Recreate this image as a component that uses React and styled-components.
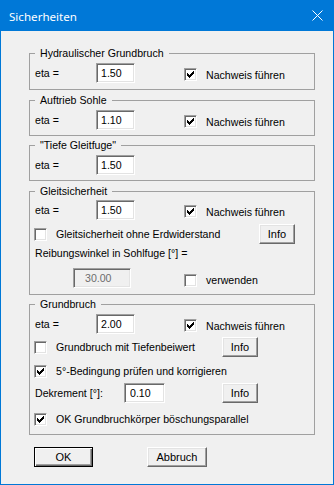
import React from "react";
import styled, { createGlobalStyle } from "styled-components";

const GlobalStyle = createGlobalStyle`
  html, body {
    margin: 0;
    padding: 0;
    background: #ffffff;
  }
  body {
    font-family: "Liberation Sans", Arial, sans-serif;
    font-size: 10.6px;
    color: #000;
  }
`;

const Window = styled.div`
  width: 334px;
  height: 485px;
  box-sizing: border-box;
  border: 1px solid #0078d7;
  background: #f0f0f0;
  display: flex;
  flex-direction: column;
`;

const TitleBar = styled.div`
  height: 30px;
  flex-shrink: 0;
  background: #0078d7;
  color: #fff;
  display: flex;
  align-items: center;
  justify-content: space-between;
  padding: 0 10px 0 8px;
  font-family: "Noto Sans", "Open Sans", sans-serif;
  font-size: 11.6px;
`;

const CloseIcon = styled.svg`
  display: block;
  margin-bottom: 2px;
`;

const Body = styled.div`
  padding: 16px 18px 0 28px;
  display: flex;
  flex-direction: column;
`;

const Group = styled.fieldset`
  margin: ${(p) => p.$mt || 0}px 0 0 0;
  padding: 0;
  border: 1px solid #a0a0a0;
  min-width: 0;
`;

const Legend = styled.legend`
  margin-left: 5px;
  padding: 0 5px;
  line-height: 12px;
  height: 12px;
  white-space: nowrap;
`;

const GroupBody = styled.div`
  padding: ${(p) => p.$pt}px 0 ${(p) => p.$pb}px 0;
  display: flex;
  flex-direction: column;
`;

const Row = styled.div`
  display: flex;
  align-items: center;
  height: ${(p) => p.$h ?? 20}px;
  margin-top: ${(p) => p.$mt || 0}px;
  padding-left: ${(p) => p.$pl ?? 5}px;
`;

const Label = styled.span`
  width: ${(p) => (p.$w ? `${p.$w}px` : "auto")};
  flex-shrink: 0;
  white-space: nowrap;
`;

const TextBox = styled.input`
  width: ${(p) => p.$w}px;
  height: 20px;
  box-sizing: border-box;
  flex-shrink: 0;
  margin: 0;
  padding: 0 0 0 ${(p) => p.$pad || 4}px;
  font: inherit;
  color: #000;
  background: #fff;
  border: 1px solid;
  border-color: #a0a0a0 #ffffff #ffffff #a0a0a0;
  box-shadow: inset 1px 1px 0 #696969, inset -1px -1px 0 #e3e3e3;
  outline: none;

  &:disabled {
    background: #f0f0f0;
    color: #6d6d6d;
  }
`;

const CheckPair = styled.div`
  display: flex;
  align-items: center;
  flex-shrink: 0;
  margin-left: ${(p) => p.$ml || 0}px;
  margin-top: ${(p) => p.$dy || 0}px;
  width: ${(p) => (p.$w ? `${p.$w}px` : "auto")};
  white-space: nowrap;
`;

const Box = styled.span`
  width: 13px;
  height: 13px;
  box-sizing: border-box;
  flex-shrink: 0;
  background: #fff;
  border: 1px solid;
  border-color: #a0a0a0 #ffffff #ffffff #a0a0a0;
  box-shadow: inset 1px 1px 0 #696969, inset -1px -1px 0 #e3e3e3;
  display: block;
`;

const CheckText = styled.span`
  margin-left: 9px;
`;

const Button = styled.button`
  width: ${(p) => p.$w}px;
  height: 20px;
  box-sizing: border-box;
  flex-shrink: 0;
  margin: 0 0 0 ${(p) => p.$ml || 0}px;
  padding: 0;
  font: inherit;
  font-size: 11px;
  color: #000;
  background: #f0f0f0;
  border: 1px solid;
  border-color: #ffffff #696969 #696969 #ffffff;
  box-shadow: inset -1px -1px 0 #a0a0a0, inset 1px 1px 0 #e3e3e3;
`;

const DefaultButton = styled(Button)`
  border: 1px solid #000;
  box-shadow: inset 1px 1px 0 #ffffff, inset -1px -1px 0 #696969,
    inset -2px -2px 0 #a0a0a0;
`;

const ButtonBar = styled.div`
  display: flex;
  align-items: center;
  margin-top: 12px;
  padding-left: 5px;
  height: 20px;
`;

const CHECK_PATH =
  "M8 2h1v1h-1z M7 3h2v1h-2z M2 4h1v1h-1z M6 4h3v1h-3z M2 5h2v1h-2z M5 5h3v1h-3z M2 6h5v1h-5z M3 7h3v1h-3z M4 8h1v1h-1z";

const Check = ({ checked, label, ml, dy, w }) => (
  <CheckPair $ml={ml} $dy={dy} $w={w}>
    <Box>
      {checked && (
        <svg width="11" height="11" viewBox="0 0 11 11" shapeRendering="crispEdges" style={{ display: "block" }}>
          <path d={CHECK_PATH} fill="#000" />
        </svg>
      )}
    </Box>
    <CheckText>{label}</CheckText>
  </CheckPair>
);

const EtaRow = ({ value, proof }) => (
  <Row>
    <Label $w={61}>eta =</Label>
    <TextBox $w={39} defaultValue={value} readOnly />
    {proof && <Check checked label="Nachweis führen" ml={49} dy={3} />}
  </Row>
);

export default function App() {
  return (
    <>
      <GlobalStyle />
      <Window>
        <TitleBar>
          <span>Sicherheiten</span>
          <CloseIcon width="11" height="11" viewBox="0 0 11 11">
            <path d="M0.5 0.5 L10.5 10.5 M10.5 0.5 L0.5 10.5" stroke="#fff" strokeWidth="1" fill="none" />
          </CloseIcon>
        </TitleBar>
        <Body>
          <Group>
            <Legend>Hydraulischer Grundbruch</Legend>
            <GroupBody $pt={4} $pb={6}>
              <EtaRow value="1.50" proof />
            </GroupBody>
          </Group>

          <Group $mt={4}>
            <Legend>Auftrieb Sohle</Legend>
            <GroupBody $pt={4} $pb={5}>
              <EtaRow value="1.10" proof />
            </GroupBody>
          </Group>

          <Group $mt={3}>
            <Legend>"Tiefe Gleitfuge"</Legend>
            <GroupBody $pt={4} $pb={5}>
              <EtaRow value="1.50" />
            </GroupBody>
          </Group>

          <Group $mt={4}>
            <Legend>Gleitsicherheit</Legend>
            <GroupBody $pt={3} $pb={6}>
              <EtaRow value="1.50" proof />
              <Row $mt={4} $pl={4}>
                <Check label="Gleitsicherheit ohne Erdwiderstand" w={225} />
                <Button $w={36}>Info</Button>
              </Row>
              <Row $mt={2} $h={14}>
                <Label>Reibungswinkel in Sohlfuge [°] =</Label>
              </Row>
              <Row $mt={8}>
                <Label $w={38} />
                <TextBox $w={58} $pad={11} defaultValue="30.00" disabled />
                <Check label="verwenden" ml={53} dy={4} />
              </Row>
            </GroupBody>
          </Group>

          <Group $mt={3}>
            <Legend>Grundbruch</Legend>
            <GroupBody $pt={4} $pb={7}>
              <EtaRow value="2.00" proof />
              <Row $mt={3} $pl={4}>
                <Check label="Grundbruch mit Tiefenbeiwert" w={188} />
                <Button $w={36}>Info</Button>
              </Row>
              <Row $mt={6} $h={16} $pl={4}>
                <Check checked label="5°-Bedingung prüfen und korrigieren" />
              </Row>
              <Row $mt={4}>
                <Label $w={89}>Dekrement [°]:</Label>
                <TextBox $w={41} $pad={5} defaultValue="0.10" readOnly />
                <Button $w={36} $ml={57}>Info</Button>
              </Row>
              <Row $mt={8} $h={16} $pl={4}>
                <Check checked label="OK Grundbruchkörper böschungsparallel" />
              </Row>
            </GroupBody>
          </Group>

          <ButtonBar>
            <DefaultButton $w={59}>OK</DefaultButton>
            <Button $w={60} $ml={54}>Abbruch</Button>
          </ButtonBar>
        </Body>
      </Window>
    </>
  );
}
